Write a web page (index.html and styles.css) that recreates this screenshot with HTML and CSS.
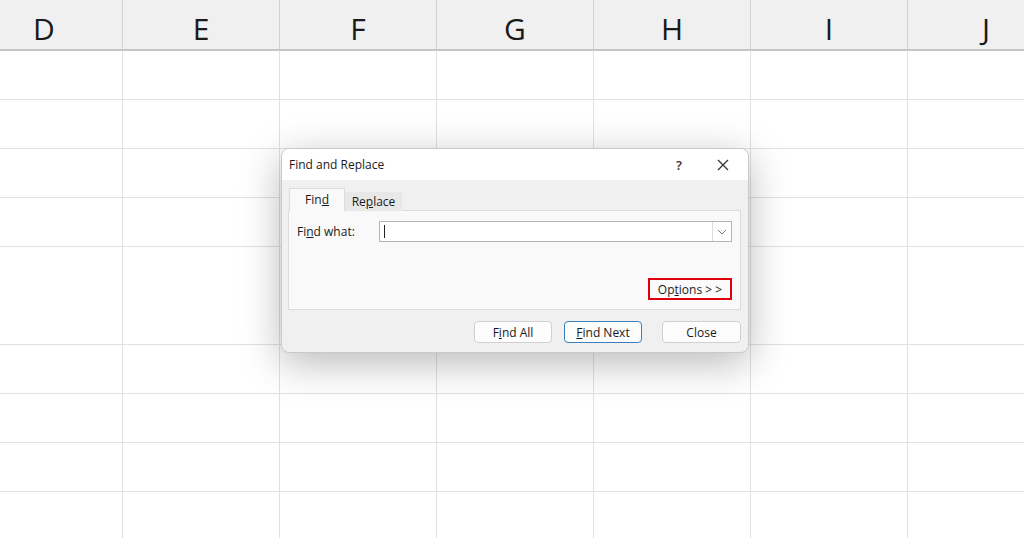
FILE: index.html
```html
<!DOCTYPE html>
<html lang="en">

<head>
    <meta charset="UTF-8">
    <meta name="viewport" content="width=device-width, initial-scale=1.0">
    <title>Find and Replace</title>
    <link rel="stylesheet" href="styles.css">
</head>

<body>
    <div class="sheet">
        <div class="grid">
            <div class="col-head">D</div>
            <div class="col-head">E</div>
            <div class="col-head">F</div>
            <div class="col-head">G</div>
            <div class="col-head">H</div>
            <div class="col-head">I</div>
            <div class="col-head">J</div>
        </div>
        <div class="grid rows" id="rows"></div>

        <div class="dialog">
            <div class="title-bar">
                <span class="title">Find and Replace</span>
                <span class="help">?</span>
                <span class="close-x">
                    <svg width="12" height="12" viewBox="0 0 12 12">
                        <path d="M1 1 L11 11 M11 1 L1 11" stroke="#333" stroke-width="1.3" fill="none" />
                    </svg>
                </span>
            </div>
            <div class="dialog-body">
                <div class="tabs">
                    <div class="tab active">Fin<u>d</u></div>
                    <div class="tab">Re<u>p</u>lace</div>
                </div>
                <div class="panel">
                    <div class="field-row">
                        <label>Fi<u>n</u>d what:</label>
                        <div class="combo">
                            <span class="caret"></span>
                            <span class="drop">
                                <svg width="10" height="6" viewBox="0 0 10 6">
                                    <path d="M1 1 L5 5 L9 1" stroke="#777" stroke-width="1" fill="none" />
                                </svg>
                            </span>
                        </div>
                    </div>
                    <div class="options-row">
                        <button class="btn options">Op<u>t</u>ions &gt; &gt;</button>
                    </div>
                </div>
                <div class="actions">
                    <button class="btn">F<u>i</u>nd All</button>
                    <button class="btn primary"><u>F</u>ind Next</button>
                    <button class="btn close">Close</button>
                </div>
            </div>
        </div>
    </div>
    <script>
        // plain spreadsheet rows, row 5 is double height
        const heights = [49, 49, 49, 49, 98, 49, 49, 49, 49];
        const rows = document.getElementById('rows');
        rows.style.gridTemplateRows = heights.map(h => h + 'px').join(' ');
        heights.forEach(() => {
            for (let c = 0; c < 7; c++) {
                const cell = document.createElement('div');
                cell.className = 'cell';
                rows.appendChild(cell);
            }
        });
    </script>
</body>

</html>
```

FILE: styles.css
```css
* {
    box-sizing: border-box;
}

body {
    margin: 0;
    width: 1024px;
    height: 538px;
    overflow: hidden;
    background: #fff;
    font-family: "Open Sans", "Noto Sans", Arial, sans-serif;
    color: #1f1f1f;
}

.sheet {
    position: relative;
    width: 1024px;
    height: 538px;
    overflow: hidden;
}

.grid {
    display: grid;
    grid-template-columns: repeat(7, 157px);
    margin-left: -34px;
}

.col-head {
    height: 51px;
    background: #f0f0f0;
    border-right: 1px solid #d2d2d2;
    border-bottom: 2px solid #c4c4c4;
    display: flex;
    justify-content: center;
    align-items: center;
    font-size: 30px;
    color: #1a1a1a;
    padding-top: 8px;
}

.cell {
    border-right: 1px solid #e1e1e1;
    border-bottom: 1px solid #e1e1e1;
}

/* dialog */

.dialog {
    position: absolute;
    left: 281px;
    top: 148px;
    width: 468px;
    height: 205px;
    border: 1px solid #c9c9c9;
    border-radius: 8px;
    background: #f0f0f0;
    overflow: hidden;
    box-shadow: 0 10px 40px rgba(0, 0, 0, 0.28);
    font-size: 12px;
}

.title-bar {
    height: 31px;
    background: #fff;
    display: flex;
    align-items: center;
    padding-left: 7px;
}

.title {
    flex: 1;
    color: #1a1a1a;
}

.help {
    width: 20px;
    font-size: 13px;
    font-weight: 600;
    color: #333;
    margin-right: 21px;
    text-align: center;
}

.close-x {
    width: 26px;
    display: flex;
    justify-content: center;
    margin-right: 12px;
}

.dialog-body {
    padding: 8px 7px 0 6px;
}

.tabs {
    display: flex;
    align-items: flex-end;
    height: 23px;
    padding-left: 1px;
    margin-bottom: -1px;
    position: relative;
}

.tab {
    width: 57px;
    height: 19px;
    background: #e8e8e8;
    display: flex;
    justify-content: center;
    align-items: center;
    color: #1a1a1a;
}

.tab.active {
    width: 56px;
    height: 23px;
    background: #f9f9f9;
    border: 1px solid #dcdcdc;
    border-bottom: none;
    padding-bottom: 2px;
}

.panel {
    height: 100px;
    background: #f9f9f9;
    border: 1px solid #dcdcdc;
    padding: 10px 8px 0 8px;
    display: flex;
    flex-direction: column;
}

.field-row {
    display: flex;
    align-items: center;
    height: 21px;
}

.field-row label {
    width: 82px;
    color: #1a1a1a;
}

.combo {
    flex: 1;
    height: 21px;
    background: #fff;
    border: 1px solid #b4b4b4;
    display: flex;
    align-items: center;
    justify-content: space-between;
    padding-left: 4px;
}

.caret {
    width: 1px;
    height: 13px;
    background: #222;
}

.drop {
    width: 19px;
    height: 19px;
    border-left: 1px solid #dcdcdc;
    display: flex;
    justify-content: center;
    align-items: center;
}

.options-row {
    display: flex;
    justify-content: flex-end;
    margin-top: 36px;
}

.btn {
    font-family: "Open Sans", "Noto Sans", Arial, sans-serif;
    font-size: 12px;
    color: #1a1a1a;
    height: 22px;
    background: #fdfdfd;
    border: 1px solid #d0d0d0;
    border-radius: 4px;
    padding: 0;
    display: flex;
    justify-content: center;
    align-items: center;
}

.btn.options {
    width: 84px;
    height: 22px;
    border: 2px solid #e0000c;
    border-radius: 0;
    background: #fbfbfb;
}

.actions {
    display: flex;
    justify-content: flex-end;
    margin-top: 11px;
    padding-right: 0;
}

.actions .btn {
    width: 78px;
    margin-left: 12px;
}

.actions .btn.primary {
    border: 1px solid #3c7fc1;
}

.actions .btn.close {
    width: 79px;
    margin-left: 20px;
}
```
